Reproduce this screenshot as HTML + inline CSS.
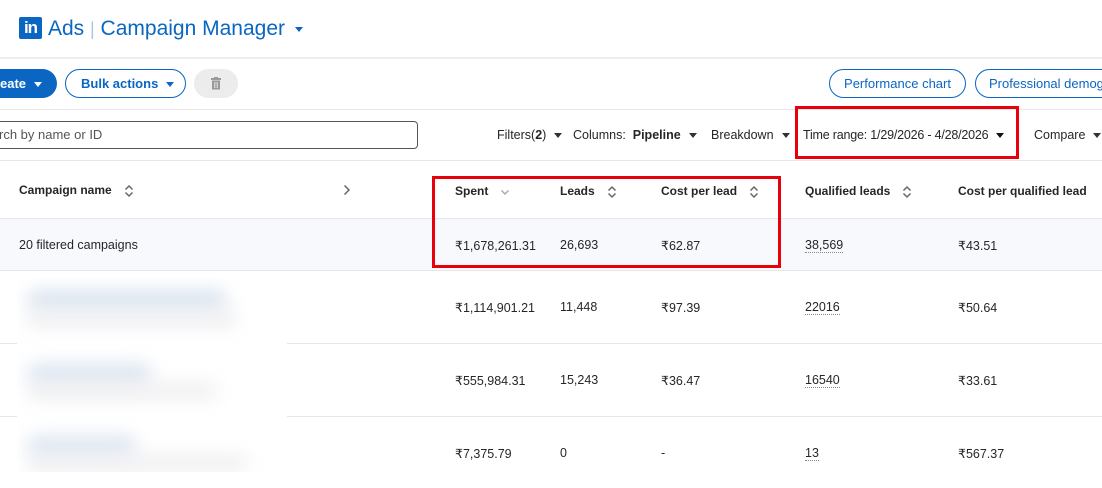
<!DOCTYPE html>
<html><head><meta charset="utf-8"><style>
*{margin:0;padding:0;box-sizing:border-box}
body{width:1102px;height:488px;overflow:hidden;background:#fff;font-family:"Liberation Sans",sans-serif;position:relative;color:#1f1f1f}
.a{position:absolute;white-space:nowrap}
.hl{position:absolute;left:0;width:1102px;height:1px;background:#e6e6e6}
.t{font-size:12.5px;color:#262626}
.h{font-size:12px;font-weight:600;color:#262626}
.car{display:inline-block;width:0;height:0;border-left:4.5px solid transparent;border-right:4.5px solid transparent;border-top:5px solid #333;vertical-align:middle;margin-left:8px}
.btn{position:absolute;height:29px;border:1px solid #0a66c2;border-radius:15px;color:#0a66c2;font-size:13px;font-weight:bold;line-height:27px;padding:0 15px;white-space:nowrap;overflow:hidden}
.sort{display:inline-block;width:10px;height:14px;vertical-align:middle;margin-left:12px}
.dot{border-bottom:1px dotted #888}
.red{position:absolute;border:3px solid #e8000a}
.blob{position:absolute;border-radius:10px;filter:blur(9px)}
</style></head><body>
<div class="a" style="left:19px;top:17px;width:23px;height:22px;background:#0a66c2;border-radius:2px;color:#fff;font-weight:bold;font-size:17px;line-height:22px;text-align:center;letter-spacing:-1px">in</div>
<div class="a" style="left:48px;top:16px;font-size:21px;color:#0a66c2;line-height:26px">Ads <span style="color:#a9c6e6;font-size:18px">|</span> Campaign Manager<span class="car" style="border-top-color:#0a66c2;margin-left:10px"></span></div>
<div class="hl" style="top:57px;height:2px;background:#eee"></div>

<div class="a" style="left:-20px;top:69px;width:77px;height:29px;background:#0a66c2;border-radius:15px;color:#fff;font-size:13px;font-weight:bold;line-height:29px;padding-left:20px">eate<span class="car" style="border-top-color:#fff"></span></div>
<div class="btn" style="left:65px;top:69px;width:121px">Bulk actions<span class="car" style="border-top-color:#0a66c2"></span></div>
<div class="a" style="left:194px;top:69px;width:44px;height:29px;background:#ececec;border-radius:15px">
<svg width="12" height="13" style="position:absolute;left:16px;top:8px" viewBox="0 0 12 13"><rect x="1" y="1" width="10" height="2" fill="#999"/><rect x="4" y="0" width="4" height="2" fill="#999"/><rect x="2" y="3.5" width="8" height="9" fill="#999"/><rect x="4.3" y="5" width="1" height="6" fill="#eee"/><rect x="6.7" y="5" width="1" height="6" fill="#eee"/></svg></div>
<div class="btn" style="left:829px;top:69px;width:137px;text-align:center;font-weight:normal;padding:0">Performance chart</div>
<div class="btn" style="left:975px;top:69px;width:160px;font-weight:normal;padding-left:13px">Professional demographics</div>
<div class="hl" style="top:109px"></div>

<div class="a" style="left:-10px;top:121px;width:428px;height:28px;border:1px solid #555;border-radius:4px;font-size:13px;color:#555;line-height:26px;padding-left:8px">rch by name or ID</div>
<div class="a t" style="left:497px;top:128px">Filters(<b>2</b>)<span class="car"></span></div>
<div class="a t" style="left:573px;top:128px">Columns: &nbsp;<b>Pipeline</b><span class="car"></span></div>
<div class="a t" style="left:711px;top:128px">Breakdown<span class="car"></span></div>
<div class="a t" style="left:803px;top:128px;letter-spacing:-0.2px">Time range: 1/29/2026 - 4/28/2026<span class="car" style="border-top-color:#111"></span></div>
<div class="a t" style="left:1034px;top:128px">Compare<span class="car"></span></div>
<div class="hl" style="top:160px"></div>

<svg width="0" height="0" style="position:absolute"><defs><symbol id="s" viewBox="0 0 10 14"><path d="M1.5 5.5L5 2L8.5 5.5M1.5 8.5L5 12L8.5 8.5" fill="none" stroke="#666" stroke-width="1.5"/></symbol></defs></svg>
<div class="a h" style="left:19px;top:183px">Campaign name<svg class="sort"><use href="#s"/></svg></div>
<svg class="a" style="left:343px;top:183px" width="8" height="14" viewBox="0 0 8 14"><path d="M1.5 2.5L6 7L1.5 11.5" fill="none" stroke="#666" stroke-width="1.5"/></svg>
<div class="a h" style="left:455px;top:184px">Spent<svg class="sort"><path d="M1.5 5.5L5 9L8.5 5.5" fill="none" stroke="#aaa" stroke-width="1.5"/></svg></div>
<div class="a h" style="left:560px;top:184px">Leads<svg class="sort"><use href="#s"/></svg></div>
<div class="a h" style="left:661px;top:184px">Cost per lead<svg class="sort"><use href="#s"/></svg></div>
<div class="a h" style="left:805px;top:184px">Qualified leads<svg class="sort"><use href="#s"/></svg></div>
<div class="a h" style="left:958px;top:184px">Cost per qualified lead</div>
<div class="hl" style="top:218px"></div>

<div class="a" style="left:0;top:219px;width:1102px;height:51px;background:#f8f9fd"></div>
<div class="a t" style="left:19px;top:238px">20 filtered campaigns</div>
<div class="a t" style="left:455px;top:238px">₹1,678,261.31</div>
<div class="a t" style="left:560px;top:238px">26,693</div>
<div class="a t" style="left:661px;top:238px">₹62.87</div>
<div class="a t" style="left:805px;top:238px"><span class="dot">38,569</span></div>
<div class="a t" style="left:958px;top:238px">₹43.51</div>
<div class="hl" style="top:270px"></div>

<div class="a t" style="left:455px;top:300px">₹1,114,901.21</div>
<div class="a t" style="left:560px;top:300px">11,448</div>
<div class="a t" style="left:661px;top:300px">₹97.39</div>
<div class="a t" style="left:805px;top:300px"><span class="dot">22016</span></div>
<div class="a t" style="left:958px;top:300px">₹50.64</div>
<div class="hl" style="top:343px"></div>

<div class="a t" style="left:455px;top:373px">₹555,984.31</div>
<div class="a t" style="left:560px;top:373px">15,243</div>
<div class="a t" style="left:661px;top:373px">₹36.47</div>
<div class="a t" style="left:805px;top:373px"><span class="dot">16540</span></div>
<div class="a t" style="left:958px;top:373px">₹33.61</div>
<div class="hl" style="top:416px"></div>

<div class="a t" style="left:455px;top:446px">₹7,375.79</div>
<div class="a t" style="left:560px;top:446px">0</div>
<div class="a t" style="left:661px;top:446px">-</div>
<div class="a t" style="left:805px;top:446px"><span class="dot">13</span></div>
<div class="a t" style="left:958px;top:446px">₹567.37</div>

<div class="a" style="left:17px;top:278px;width:270px;height:194px;background:#fff;overflow:hidden">
<div class="blob" style="left:10px;top:12px;width:200px;height:20px;background:#d9e3ef"></div>
<div class="blob" style="left:10px;top:34px;width:210px;height:14px;background:#ececef"></div>
<div class="blob" style="left:10px;top:86px;width:125px;height:20px;background:#dbe4f0"></div>
<div class="blob" style="left:10px;top:106px;width:190px;height:14px;background:#ececef"></div>
<div class="blob" style="left:10px;top:158px;width:110px;height:20px;background:#dce5f0"></div>
<div class="blob" style="left:10px;top:178px;width:220px;height:14px;background:#ececef"></div>
</div>

<div class="red" style="left:795px;top:106px;width:224px;height:53px"></div>
<div class="red" style="left:432px;top:176px;width:349px;height:92px"></div>
</body></html>
